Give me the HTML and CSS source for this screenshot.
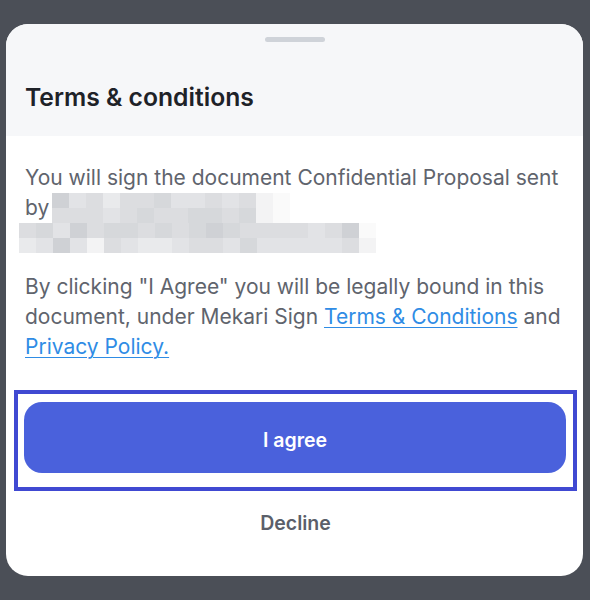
FILE: index.html
```html
<!DOCTYPE html>
<html lang="en">
<head>
<meta charset="utf-8">
<title>Terms &amp; conditions</title>
<link rel="stylesheet" href="styles.css">
</head>
<body>
<div class="sheet">
  <div class="sheet-header">
    <div class="handle"></div>
    <h1 class="title">Terms &amp; conditions</h1>
  </div>
  <div class="sheet-body">
    <p class="text">You will sign the document Confidential Proposal sent<br>by <span class="mosaic mosaic-short"><i class="s1"></i><i class="s4"></i><i class="s3"></i><i class="s5"></i><i class="s3"></i><i class="s3"></i><i class="s2"></i><i class="s4"></i><i class="s4"></i><i class="s3"></i><i class="s4"></i><i class="s3"></i><i class="s6"></i><i class="s7"></i><i class="s3"></i><i class="s3"></i><i class="s3"></i><i class="s4"></i><i class="s3"></i><i class="s2"></i><i class="s3"></i><i class="s3"></i><i class="s2"></i><i class="s2"></i><i class="s3"></i><i class="s2"></i><i class="s6"></i><i class="s7"></i></span><span class="mosaic mosaic-long"><i class="s3"></i><i class="s2"></i><i class="s4"></i><i class="s1"></i><i class="s3"></i><i class="s2"></i><i class="s2"></i><i class="s3"></i><i class="s2"></i><i class="s3"></i><i class="s2"></i><i class="s1"></i><i class="s2"></i><i class="s3"></i><i class="s3"></i><i class="s3"></i><i class="s3"></i><i class="s4"></i><i class="s3"></i><i class="s1"></i><i class="s7"></i><i class="s5"></i><i class="s4"></i><i class="s1"></i><i class="s4"></i><i class="s6"></i><i class="s3"></i><i class="s4"></i><i class="s5"></i><i class="s5"></i><i class="s4"></i><i class="s3"></i><i class="s3"></i><i class="s4"></i><i class="s2"></i><i class="s4"></i><i class="s4"></i><i class="s4"></i><i class="s4"></i><i class="s4"></i><i class="s3"></i><i class="s6"></i></span></p>
    <p class="text second">By clicking "I Agree" you will be legally bound in this document, under Mekari Sign <a class="link" href="#">Terms &amp; Conditions</a> and <a class="link" href="#">Privacy Policy.</a></p>
  </div>
  <div class="actions">
    <div class="focus-ring">
      <button class="btn-primary" type="button">I agree</button>
    </div>
    <button class="btn-text" type="button">Decline</button>
  </div>
</div>
</body>
</html>
```
FILE: styles.css
```css
* { box-sizing: border-box; }
html, body { margin: 0; padding: 0; }
body {
  background: #4b4f57;
  font-family: Inter, "Noto Sans", "Liberation Sans", sans-serif;
  padding: 24px 7px 24px 6px;
  width: 590px;
  height: 600px;
  overflow: hidden;
}
.sheet {
  background: #ffffff;
  border-radius: 22px;
  overflow: hidden;
  display: flex;
  flex-direction: column;
}
.sheet-header {
  background: #f6f7f9;
  padding: 13px 19px 24px 19px;
  display: flex;
  flex-direction: column;
}
.handle {
  align-self: center;
  width: 60px;
  height: 5px;
  border-radius: 3px;
  background: #cfd3d9;
  margin-left: 1px;
}
.title {
  margin: 40px 0 0 0;
  font-size: 24.7px;
  line-height: 30px;
  font-weight: 600;
  color: #1e2228;
}
.sheet-body {
  padding: 27px 19px 0 19px;
}
.text {
  margin: 0;
  font-size: 21px;
  line-height: 30px;
  color: #60646d;
  font-weight: 400;
}
.text.second { margin-top: 19px; }
.link {
  color: #2f8ce5;
  text-decoration: underline;
  text-decoration-thickness: 1px;
  text-underline-offset: 3px;
}
.mosaic {
  display: inline-grid;
  grid-auto-rows: 15px;
  vertical-align: top;
}
.mosaic i { display: block; }
.mosaic-short {
  grid-template-columns: repeat(14, 17px);
  margin-left: -3px;
}
.mosaic-long {
  display: grid;
  grid-template-columns: repeat(21, 17px);
  margin-left: -6px;
  width: max-content;
}
.s1 { background: #cfd1d5; }
.s2 { background: #d6d8db; }
.s3 { background: #dcdde0; }
.s4 { background: #e2e3e6; }
.s5 { background: #e9eaec; }
.s6 { background: #f3f3f4; }
.s7 { background: #fafafa; }
.actions {
  padding: 28px 6px 40px 8px;
  display: flex;
  flex-direction: column;
  align-items: stretch;
}
.focus-ring {
  border: 4px solid #4049d2;
  padding: 8px 7px 14px 6px;
}
.btn-primary {
  display: block;
  width: 100%;
  height: 71px;
  border: none;
  border-radius: 18px;
  background: #4a61dc;
  color: #ffffff;
  font-family: inherit;
  font-size: 19.5px;
  font-weight: 600;
  padding: 4px 0 0 0;
  cursor: pointer;
}
.btn-text {
  margin-top: 20px;
  border: none;
  background: transparent;
  font-family: inherit;
  font-size: 19.5px;
  line-height: 25px;
  font-weight: 600;
  color: #5b5f6a;
  padding: 0;
  align-self: center;
  margin-left: 0;
}
```
